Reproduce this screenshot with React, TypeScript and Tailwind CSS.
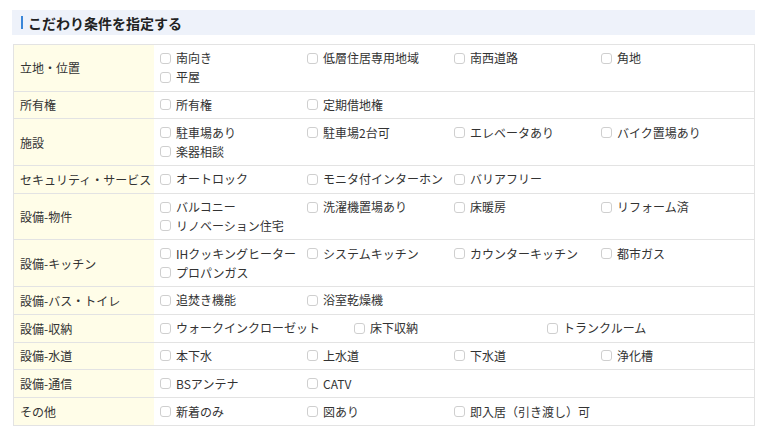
const rows: {label: string; items: string[]; cols?: number}[] = [
	{label: '立地・位置', items: ['南向き', '低層住居専用地域', '南西道路', '角地', '平屋']},
	{label: '所有権', items: ['所有権', '定期借地権']},
	{label: '施設', items: ['駐車場あり', '駐車場2台可', 'エレベータあり', 'バイク置場あり', '楽器相談']},
	{label: 'セキュリティ・サービス', items: ['オートロック', 'モニタ付インターホン', 'バリアフリー']},
	{label: '設備-物件', items: ['バルコニー', '洗濯機置場あり', '床暖房', 'リフォーム済', 'リノベーション住宅']},
	{label: '設備-キッチン', items: ['IHクッキングヒーター', 'システムキッチン', 'カウンターキッチン', '都市ガス', 'プロパンガス']},
	{label: '設備-バス・トイレ', items: ['追焚き機能', '浴室乾燥機']},
	{label: '設備-収納', items: ['ウォークインクローゼット', '床下収納', 'トランクルーム'], cols: 3},
	{label: '設備-水道', items: ['本下水', '上水道', '下水道', '浄化槽']},
	{label: '設備-通信', items: ['BSアンテナ', 'CATV']},
	{label: 'その他', items: ['新着のみ', '図あり', '即入居（引き渡し）可']},
];

const CheckItem = ({text}: {text: string}) => (
	<label className="flex items-center h-[18.8px] whitespace-nowrap cursor-pointer">
		<span className="inline-block w-[11px] h-[11px] rounded-[3px] border border-[#cfcfcf] bg-white mr-[5px] shrink-0" />
		<span>{text}</span>
	</label>
);

const App = () => {
	return (
		<div
			className="w-[768px] h-[443px] bg-white text-[#333] text-[12px] px-[12px] pt-[10px]"
			style={{fontFamily: '"Noto Sans CJK JP", "Noto Sans", sans-serif'}}
		>
			<div className="h-[25px] w-[743px] bg-[#eef2fa] flex items-center pl-[9px]">
				<span className="inline-block w-[2px] h-[13px] bg-[#3a86d8] mr-[5px]" />
				<h2 className="text-[14px] font-bold text-[#222] leading-none">こだわり条件を指定する</h2>
			</div>

			<div className="mt-[9px] ml-[1px] w-[742px] border border-[#e3e3e3]">
				{rows.map((row, i) => (
					<div key={row.label} className={`flex ${i > 0 ? 'border-t border-[#e3e3e3]' : ''}`}>
						<div className="w-[140px] shrink-0 bg-[#fffde8] flex items-center pl-[6px] leading-[19px]">
							{row.label}
						</div>
						<div
							className={`grid py-[4px] pl-[6px] ${
								row.cols === 3 ? 'grid-cols-[194px_193px_193px]' : 'grid-cols-[147px_147px_147px_147px]'
							}`}
						>
							{row.items.map(item => (
								<CheckItem key={item} text={item} />
							))}
						</div>
					</div>
				))}
			</div>
		</div>
	);
};

export default App;
